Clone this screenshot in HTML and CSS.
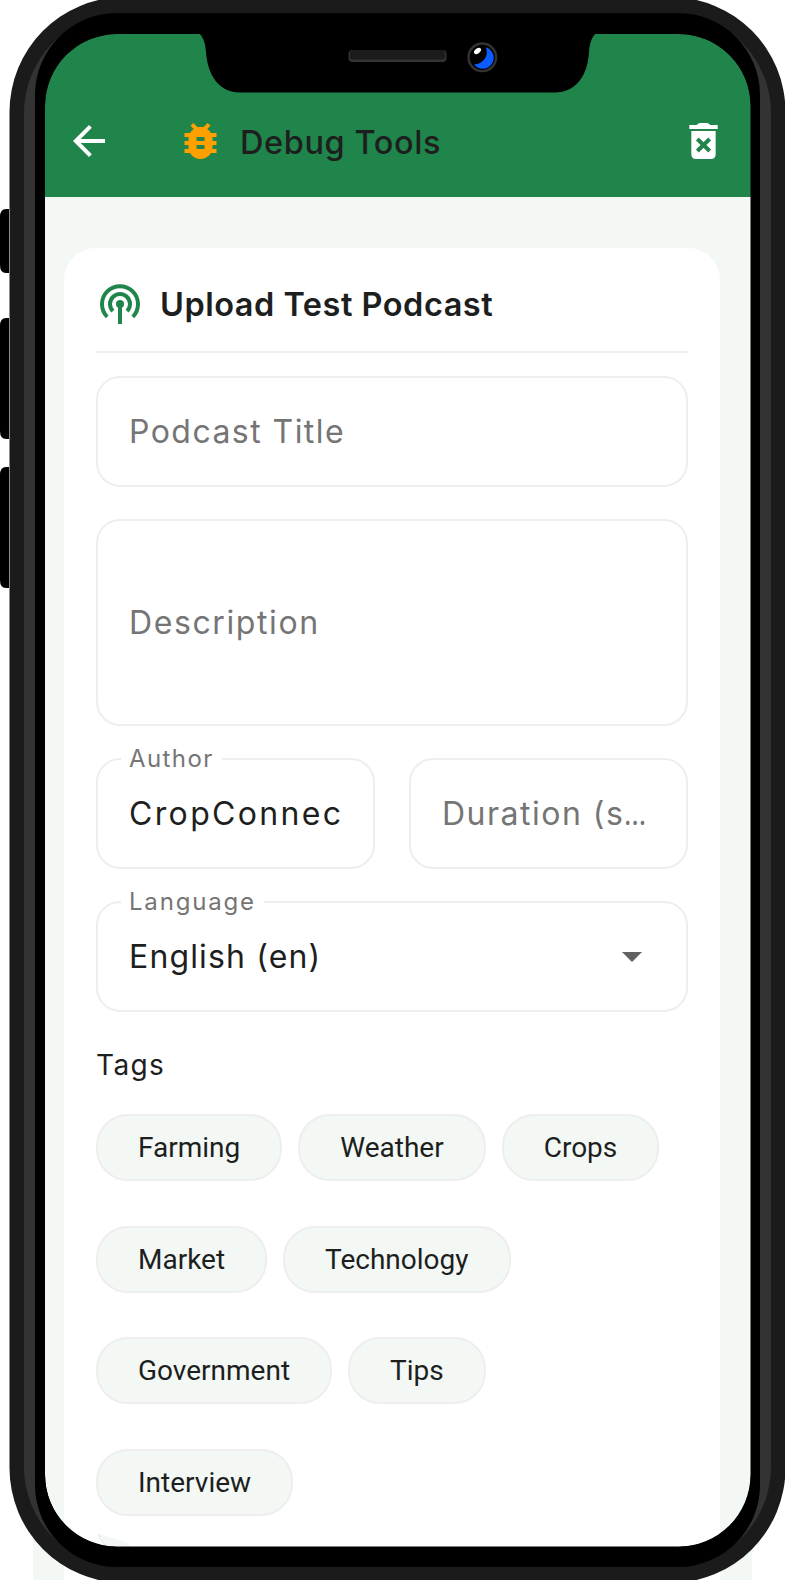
FILE: index.html
```html
<!DOCTYPE html>
<html lang="en">
<head>
<meta charset="utf-8">
<title>Debug Tools</title>
<link rel="stylesheet" href="styles.css">
</head>
<body>
<div class="device">
  <main class="screen">
    <header class="appbar">
      <svg class="back" viewBox="0 0 24 24"><path fill="#fff" d="M20 11H7.83l5.59-5.59L12 4l-8 8 8 8 1.41-1.41L7.83 13H20z"/></svg>
      <svg class="bug" viewBox="0 0 24 24"><path fill="#ffa000" d="M20 8h-2.81c-.45-.78-1.07-1.45-1.82-1.96L17 4.41 15.59 3l-2.17 2.17C12.96 5.06 12.49 5 12 5s-.96.06-1.41.17L8.41 3 7 4.41l1.62 1.63C7.88 6.55 7.26 7.22 6.81 8H4v2h2.09c-.05.33-.09.66-.09 1v1H4v2h2v1c0 .34.04.67.09 1H4v2h2.81c1.04 1.79 2.97 3 5.19 3s4.15-1.21 5.19-3H20v-2h-2.09c.05-.33.09-.66.09-1v-1h2v-2h-2v-1c0-.34-.04-.67-.09-1H20V8zm-6 8h-4v-2h4v2zm0-4h-4v-2h4v2z"/></svg>
      <h1 class="title">Debug Tools</h1>
      <svg class="trash" viewBox="0 0 85 108"><path fill="#fff" d="M0 6h22q5-6 11-6h19q6 0 11 6h22v12H0zM6 24h73v70q0 14-14 14H20Q6 108 6 94z"/><path stroke="#20854b" stroke-width="12" d="M24 48l37 36M61 48L24 84"/></svg>
    </header>
    <section class="card">
      <div class="heading">
        <svg class="podcast" viewBox="0 0 40 40" fill="none" stroke="#20854b" stroke-width="4"><path d="M7.200 32.800A18 18 0 1 1 32.800 32.800"/><path d="M12.900 27.100A10 10 0 1 1 27.100 27.100"/><path d="M20 20v20"/><circle cx="20" cy="20" r="4" fill="#20854b" stroke="none"/></svg>
        <h2 class="heading-text">Upload Test Podcast</h2>
      </div>
      <div class="field"><span class="hint hint-title">Podcast Title</span></div>
      <div class="field area"><span class="hint hint-desc">Description</span></div>
      <div class="pair">
        <div class="field"><span class="label label-author">Author</span><span class="value value-author">CropConnect</span></div>
        <div class="field"><span class="hint hint-duration">Duration (s<span class="dots">…</span></span></div>
      </div>
      <div class="field"><span class="label label-lang">Language</span><span class="value value-lang">English (en)</span><svg class="caret" viewBox="0 0 20 10"><path fill="#616161" d="M0 0h20L10 10z"/></svg></div>
      <h3 class="tags-title">Tags</h3>
      <div class="chips">
        <span class="chip">Farming</span><span class="chip">Weather</span><span class="chip">Crops</span>
        <span class="chip">Market</span><span class="chip">Technology</span>
        <span class="chip">Government</span><span class="chip">Tips</span>
        <span class="chip chip-last">Interview</span>
      </div>
    </section>
  </main>
  <svg class="frame" viewBox="0 0 785 1580">
    <path fill="#f3f8f5" d="M98 1533.500C104 1536 112 1538 120 1540Q127 1542 131 1547H106Q100 1541 98 1533.500z"/>
    <path fill="none" stroke="#eee" stroke-width="2" d="M98.500 1534Q101 1542 107 1547"/>
    <path d="M9 209H6Q0 209 0 217V265Q0 273 6 273H9zM9 318H6Q0 318 0 326V431Q0 439 6 439H9zM9 467H6Q0 467 0 475V580Q0 588 6 588H9z"/>
    <path fill="#1b1b1b" fill-rule="evenodd" d="M124 -3H671A115 115 0 0 1 785.500 112V1468A115 115 0 0 1 671 1583H124A115 115 0 0 1 9.500 1468V112A115 115 0 0 1 124 -3zM117 34A72 72 0 0 0 45 106V1475A72 72 0 0 0 117 1547H679A72 72 0 0 0 751 1475V106A72 72 0 0 0 679 34z"/>
    <path fill="#333" fill-rule="evenodd" d="M124 13H671A100 100 0 0 1 771 113V1467A100 100 0 0 1 671 1567H124A100 100 0 0 1 24 1467V113A100 100 0 0 1 124 13zM117 34A72 72 0 0 0 45 106V1475A72 72 0 0 0 117 1547H679A72 72 0 0 0 751 1475V106A72 72 0 0 0 679 34z"/>
    <path fill-rule="evenodd" d="M117 13H678A82 82 0 0 1 760 95V1485A82 82 0 0 1 678 1567H117A82 82 0 0 1 35 1485V95A82 82 0 0 1 117 13zM117 34A72 72 0 0 0 45 106V1475A72 72 0 0 0 117 1546.500H678A72 72 0 0 0 750.500 1475V106A72 72 0 0 0 678 34z"/>
    <path d="M199 33C204 38 205.500 45 206 52C207.500 75 219 92.500 240 92.500H555C576 92.500 588 75 589 52C589.500 45 591 38 596 33z"/>
    <rect x="348.500" y="50" width="98" height="12" rx="4" fill="#333"/><rect x="350" y="50" width="95" height="9.500" rx="3" fill="#1b1b1b"/>
    <circle cx="482.300" cy="57.300" r="13.800" stroke="#333" stroke-width="2.400"/>
    <path fill="#0a5cff" d="M486 47.300A11 11 0 1 1 474 64.500C483 64 489 57 486 47.300z"/>
    <ellipse cx="477.500" cy="51" rx="4" ry="2.400" fill="#fff" transform="rotate(-38 477.500 51)"/>
  </svg>
</div>
</body>
</html>
```
FILE: styles.css
```css
* { box-sizing: border-box; }
body { margin: 0; background: #fff; font-family: Inter, "Open Sans", sans-serif; color: #1d1f1e; }
.device { position: relative; width: 785px; height: 1580px; overflow: hidden; padding: 34px 33px 0; }
.frame { position: absolute; inset: 0; width: 785px; height: 1580px; }
.screen { width: 719px; height: 1546px; display: flex; flex-direction: column; background: linear-gradient(#fff 0 100px, #f3f8f5 100px); }
.appbar { flex: none; height: 163px; margin: 0 0 0 12px; padding: 51px 28px 0 27px; background: #20854b; display: flex; align-items: center; }
.back { width: 48px; height: 48px; margin: 0 0 0 -7px; }
.bug { width: 49px; height: 48px; margin-left: 63px; }
.title { margin: 3px auto 0 15px; font-size: 32.500px; font-weight: 500; line-height: 48px; letter-spacing: .6px; white-space: nowrap; }
.trash { width: 29px; height: 36px; margin: 0 6px 0 0; }
.card { margin: 51px 32px 0 31px; height: 1332px; padding: 24px 32px 0; background: #fff; border-radius: 32px 32px 0 0; display: flex; flex-direction: column; }
.heading { height: 81px; padding: 0 0 15px 4px; border-bottom: 2px solid #eee; display: flex; align-items: center; gap: 20px; margin-bottom: 23px; }
.podcast { width: 40px; height: 40px; }
.heading-text { margin: 0; font-size: 32.500px; font-weight: 600; letter-spacing: .5px; white-space: nowrap; }
.field { position: relative; flex: none; height: 111px; margin-bottom: 32px; padding: 0 31px; border: 2px solid #eee; border-radius: 24px; display: flex; align-items: center; justify-content: space-between; }
.area { height: 207px; }
.pair { display: grid; grid-template-columns: 279px 279px; justify-content: space-between; }
.hint, .value { font-size: 32px; line-height: 44px; white-space: nowrap; }
.hint { color: #757575; }
.hint-title { letter-spacing: 1.45px; }
.hint-desc { letter-spacing: 1.6px; }
.hint-duration { letter-spacing: 1.5px; }
.dots { letter-spacing: 0; display: inline-block; transform: scaleX(.8); transform-origin: left; }
.value-author { width: 215px; overflow: hidden; letter-spacing: 2.350px; }
.value-lang { letter-spacing: 1.15px; }
.label { position: absolute; left: 23px; top: -15px; padding: 0 8px; background: #fff; color: #757575; font-size: 24px; line-height: 28px; }
.label-author { letter-spacing: 1.4px; }
.label-lang { letter-spacing: 1.8px; }
.caret { width: 20px; height: 10px; margin: 1px 13px 0 0; }
.tags-title { margin: 1px 0 0; font-size: 28px; line-height: 40px; font-weight: 400; letter-spacing: 1.4px; }
.chips { display: flex; flex-wrap: wrap; gap: 44.500px 16px; margin-top: 29px; }
.chip { height: 67px; padding: 0 40px; border: 2px solid #eee; border-radius: 32px; background: #f3f8f5; font: 400 28px/63px Roboto, sans-serif; }
.chip-last { margin-right: 200px; }
```
